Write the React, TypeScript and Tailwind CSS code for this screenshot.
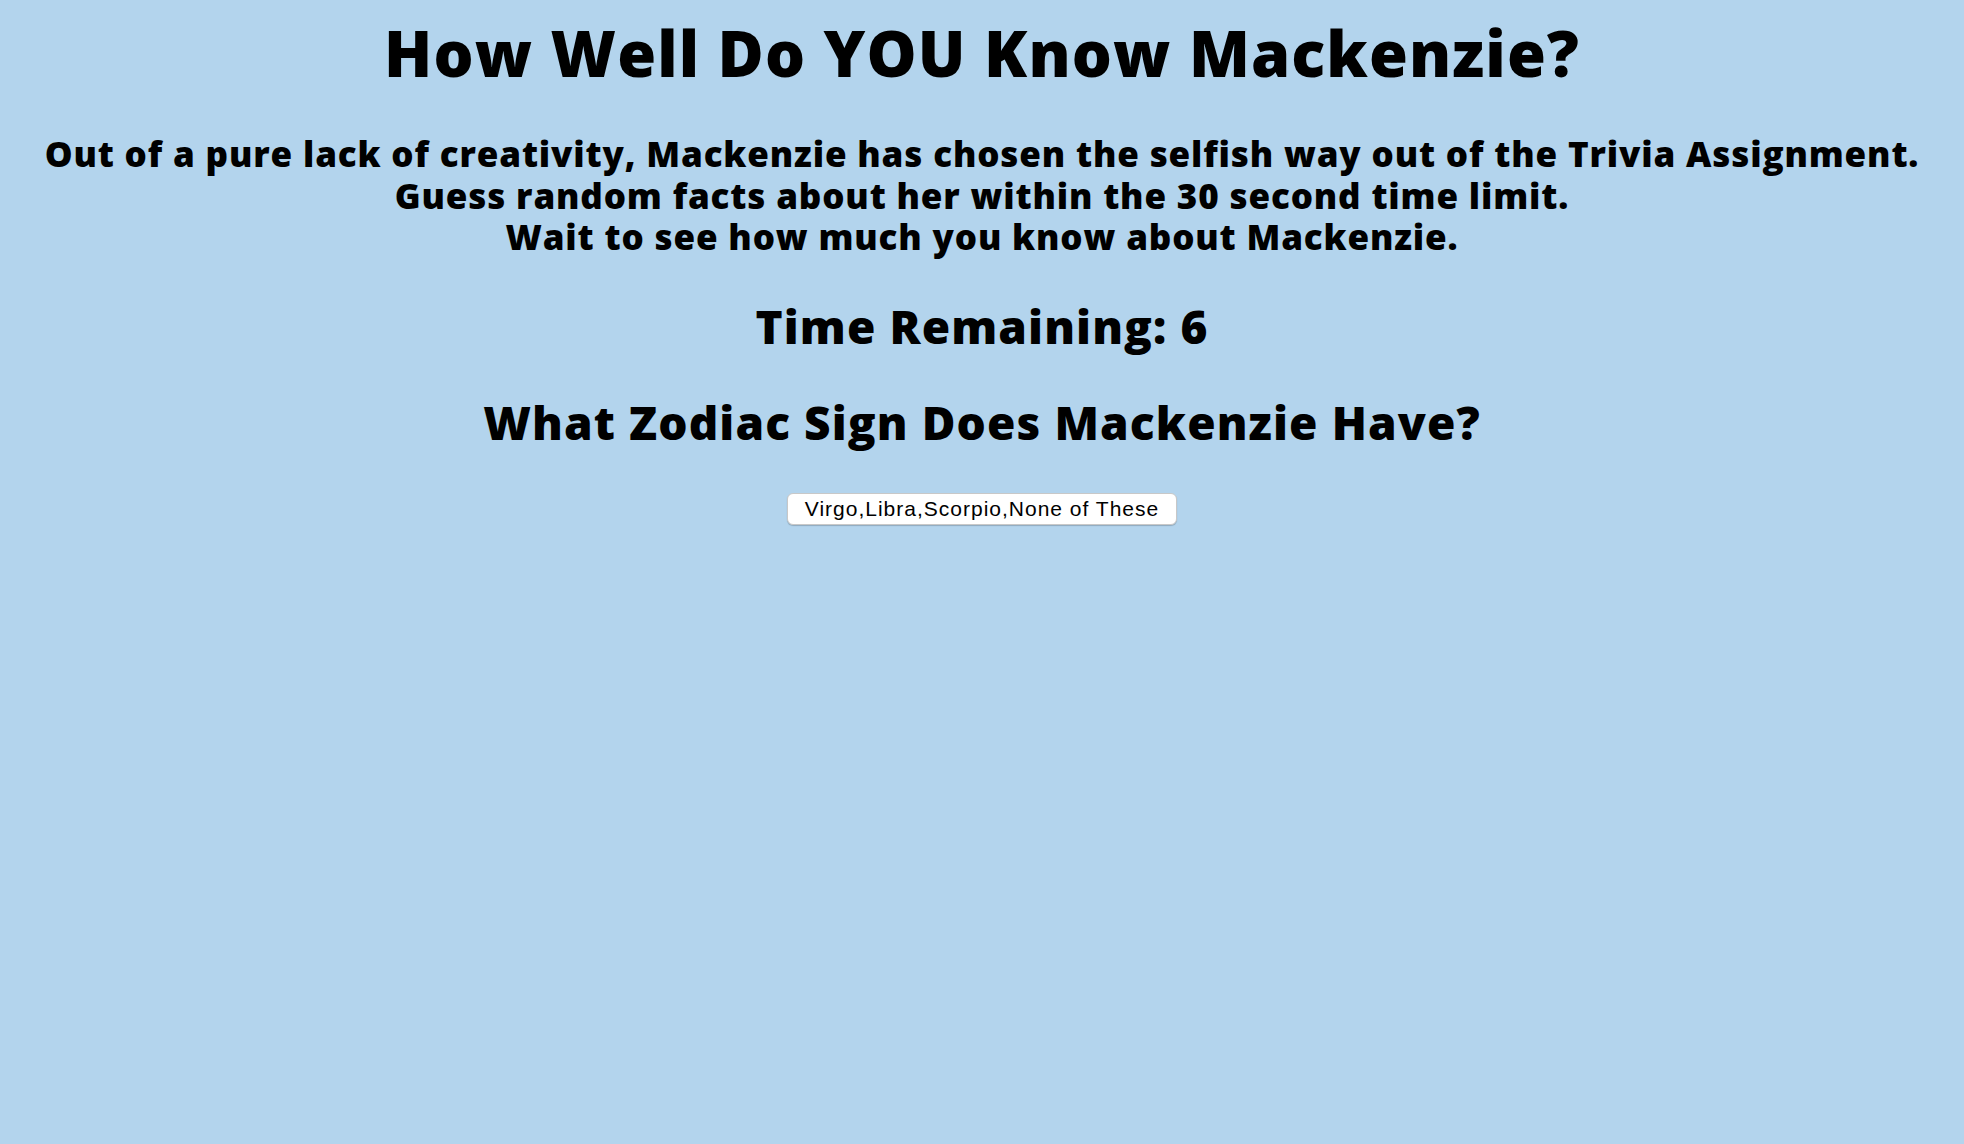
export default function App() {
  const title = "font-['Open_Sans','Noto_Sans',sans-serif] font-extrabold text-black";

  return (
    <div className="min-h-[1144px] w-full bg-[#b3d4ed] text-center">
      {/* Heading */}
      <h1 className={`${title} pt-[15px] text-[63px] leading-[76px] tracking-[1.1px]`}>
        How Well Do YOU Know Mackenzie?
      </h1>

      {/* Intro */}
      <p className={`${title} mt-[42px] text-[35px] leading-[41.5px] tracking-[0.85px]`}>
        Out of a pure lack of creativity, Mackenzie has chosen the selfish way out of the Trivia Assignment.
        <br />
        Guess random facts about her within the 30 second time limit.
        <br />
        Wait to see how much you know about Mackenzie.
      </p>

      {/* Timer */}
      <h2 className={`${title} mt-[41px] text-[46px] leading-[55px] tracking-[1.1px]`}>
        Time Remaining: 6
      </h2>

      {/* Question */}
      <h2 className={`${title} mt-[41px] text-[46px] leading-[55px] tracking-[1.1px]`}>
        What Zodiac Sign Does Mackenzie Have?
      </h2>

      <div className="mt-[43px] flex justify-center">
        <button className="h-[32px] rounded-[6px] border border-[#c8c8c8] bg-white px-[17px] font-['Liberation_Sans',Arial,sans-serif] text-[21px] leading-none tracking-[1px] text-black shadow-[0_1px_1px_rgba(0,0,0,0.2)]">
          Virgo,Libra,Scorpio,None of These
        </button>
      </div>
    </div>
  );
}
